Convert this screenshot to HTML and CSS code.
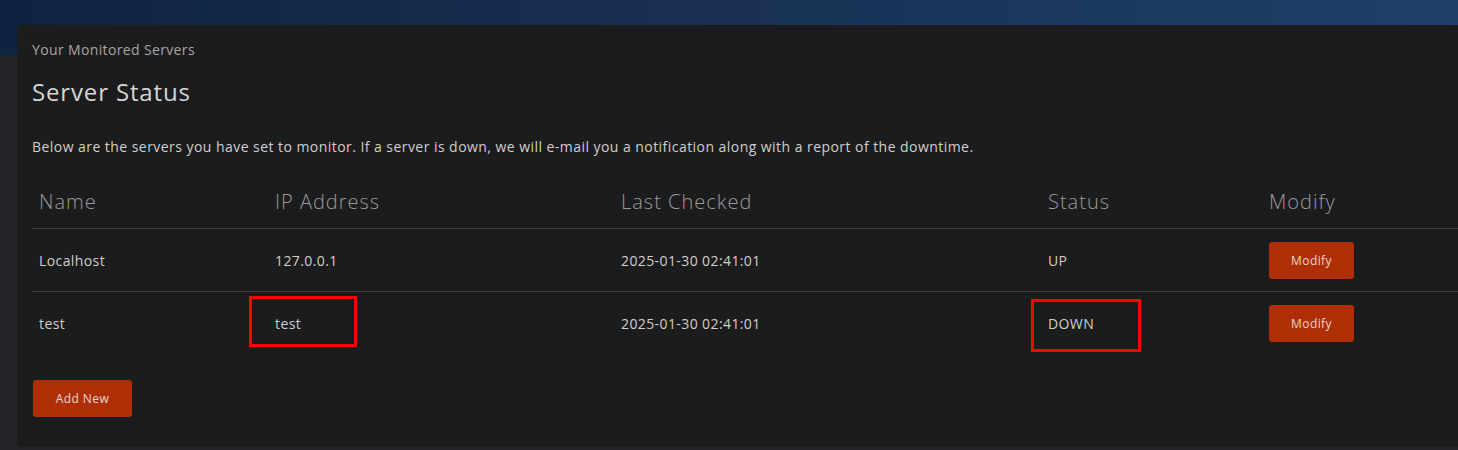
FILE: index.html
```html
<!DOCTYPE html>
<html>
<head>
<meta charset="utf-8">
<link rel="stylesheet" href="styles.css">
</head>
<body>
<main class="card">
  <div class="eyebrow">Your Monitored Servers</div>
  <h1 class="title">Server Status</h1>
  <p class="intro">Below are the servers you have set to monitor. If a server is down, we will e-mail you a notification along with a report of the downtime.</p>
  <table class="servers">
    <colgroup>
      <col class="c-name"><col class="c-ip"><col class="c-last"><col class="c-status"><col class="c-mod">
    </colgroup>
    <thead>
      <tr><th>Name</th><th>IP Address</th><th>Last Checked</th><th>Status</th><th>Modify</th></tr>
    </thead>
    <tbody>
      <tr><td>Localhost</td><td>127.0.0.1</td><td>2025-01-30 02:41:01</td><td>UP</td><td><button class="btn btn-sm">Modify</button></td></tr>
      <tr><td>test</td><td><span class="mark mark-ip">test</span></td><td>2025-01-30 02:41:01</td><td><span class="mark mark-status">DOWN</span></td><td><button class="btn btn-sm">Modify</button></td></tr>
    </tbody>
  </table>
  <button class="btn btn-add">Add New</button>
</main>
</body>
</html>
```
FILE: styles.css
```css
html, body {
  margin: 0;
  padding: 0;
}
body {
  width: 1458px;
  height: 450px;
  overflow: hidden;
  font-family: "Open Sans", "Liberation Sans", sans-serif;
  color: #d2cec9;
  background:
    linear-gradient(90deg, #0f2340 0%, #172f52 45%, #1f4068 100%) top left / 100% 55px no-repeat,
    #232427;
}
.card {
  margin: 25px 0 0 17px;
  width: 1460px;
  height: 422px;
  box-sizing: border-box;
  background: #1b1c1e;
  border-radius: 4px;
  padding: 16px 0 0 15px;
}
.eyebrow {
  font-size: 14px;
  line-height: 18px;
  color: #a9a5a0;
  letter-spacing: 0.36px;
}
.title {
  margin: 17px 0 0;
  font-size: 24px;
  font-weight: 400;
  line-height: 32px;
  color: #d8d4cf;
  letter-spacing: 0.85px;
}
.intro {
  margin: 29px 0 0;
  font-size: 14px;
  line-height: 20px;
  color: #d2cec9;
  letter-spacing: 0.45px;
}
.servers {
  margin-top: 24px;
  border-collapse: collapse;
  width: 1440px;
}
.c-name { width: 236px; }
.c-ip { width: 346px; }
.c-last { width: 427px; }
.c-status { width: 221px; }
.servers th {
  text-align: left;
  font-weight: 300;
  font-size: 20px;
  color: #9c9a98;
  padding: 0 7px 6px;
  height: 41px;
  border-bottom: 1px solid #3c3e40;
  letter-spacing: 1px;
}
.servers td {
  font-size: 14px;
  padding: 0 7px;
  height: 62px;
  border-bottom: 1px solid #3c3e40;
  vertical-align: middle;
  letter-spacing: 0.4px;
}
.servers tbody tr:last-child td {
  border-bottom: none;
}
.mark {
  position: relative;
}
.mark::before {
  content: "";
  position: absolute;
  border: 3px solid #ff0000;
}
.mark-ip::before {
  left: -26px;
  top: -18px;
  width: 102px;
  height: 45px;
}
.mark-status::before {
  left: -17px;
  top: -15px;
  width: 104px;
  height: 47px;
}
.btn {
  font-family: inherit;
  background: #ae2e06;
  color: #e6d6ce;
  border: none;
  border-radius: 3px;
  font-size: 12px;
  height: 37px;
  letter-spacing: 0.4px;
  cursor: pointer;
}
.btn-sm {
  width: 85px;
}
.btn-add {
  margin: 26px 0 0 1px;
  width: 99px;
}
```
